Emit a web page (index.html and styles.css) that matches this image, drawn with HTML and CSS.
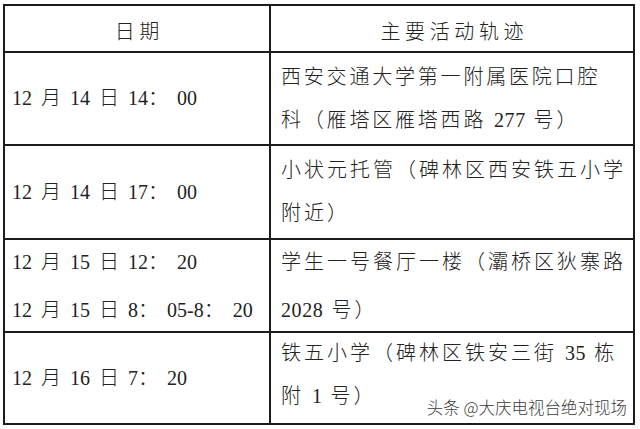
FILE: index.html
```html
<!DOCTYPE html>
<html lang="zh-CN">
<head>
<meta charset="utf-8">
<title>主要活动轨迹</title>
<link rel="stylesheet" href="styles.css">
</head>
<body>
<div class="sheet">
  <div class="grid">
    <div class="cell head">日期</div>
    <div class="cell head">主要活动轨迹</div>

    <div class="cell date"><p><span class="num">12</span> 月 <span class="num">14</span> 日 <span class="num">14</span>： <span class="num">00</span></p></div>
    <div class="cell place"><p class="wide">西安交通大学第一附属医院口腔<br>科（雁塔区雁塔西路 <span class="num">277</span> 号）</p></div>

    <div class="cell date"><p><span class="num">12</span> 月 <span class="num">14</span> 日 <span class="num">17</span>： <span class="num">00</span></p></div>
    <div class="cell place"><p>小状元托管（碑林区西安铁五小学<br>附近）</p></div>

    <div class="cell date"><p class="tall"><span class="num">12</span> 月 <span class="num">15</span> 日 <span class="num">12</span>： <span class="num">20</span><br><span class="num">12</span> 月 <span class="num">15</span> 日 <span class="num">8</span>： <span class="num">05-8</span>： <span class="num">20</span></p></div>
    <div class="cell place"><p class="tall">学生一号餐厅一楼（灞桥区狄寨路<br><span class="num">2028</span> 号）</p></div>

    <div class="cell date"><p><span class="num">12</span> 月 <span class="num">16</span> 日 <span class="num">7</span>： <span class="num">20</span></p></div>
    <div class="cell place last"><p>铁五小学（碑林区铁安三街 <span class="num">35</span> 栋<br>附 <span class="num">1</span> 号）</p></div>
  </div>
  <div class="watermark">头条 @大庆电视台绝对现场</div>
</div>
</body>
</html>
```
FILE: styles.css
```css
html, body {
  margin: 0;
  padding: 0;
  background: #ffffff;
}

.sheet {
  position: relative;
  width: 640px;
  height: 429px;
  overflow: hidden;
  padding: 4px 0 0 3px;
  box-sizing: border-box;
  font-family: "Liberation Serif", "Noto Sans CJK SC", serif;
  color: #222222;
  font-size: 20px;
}

.grid {
  display: grid;
  grid-template-columns: 266px 364px;
  grid-template-rows: 47px 93px 94px 93px 92px;
  width: 632px;
  border-top: 2px solid #1c1c1c;
  border-left: 2px solid #1c1c1c;
  box-sizing: border-box;
}

.cell {
  border-right: 2px solid #1c1c1c;
  border-bottom: 2px solid #1c1c1c;
  box-sizing: border-box;
  display: flex;
  align-items: center;
  white-space: nowrap;
}

.cell p {
  margin: 0;
  line-height: 43px;
}

.cell p.tall {
  line-height: 48px;
}

.head {
  justify-content: center;
  letter-spacing: 4.6px;
  padding-left: 4.6px;
  padding-top: 3px;
  font-weight: 300;
}

.date {
  padding-left: 7px;
  word-spacing: 4px;
  font-weight: 300;
}

.place {
  padding-left: 10px;
  letter-spacing: 3px;
  font-weight: 300;
}

.place p.wide {
  letter-spacing: 2.8px;
}

.place.last p {
  margin-bottom: 6px;
}

.num {
  letter-spacing: 0.6px;
  word-spacing: 0;
}

.date .num {
  letter-spacing: 0;
}

.watermark {
  position: absolute;
  right: 13px;
  top: 399px;
  font-family: "Noto Sans CJK SC", sans-serif;
  font-size: 16.5px;
  line-height: 1;
  color: #3c3c3c;
  font-weight: 300;
  text-shadow: 0 0 2px #ffffff, 0 0 2px #ffffff;
  white-space: nowrap;
}
```
